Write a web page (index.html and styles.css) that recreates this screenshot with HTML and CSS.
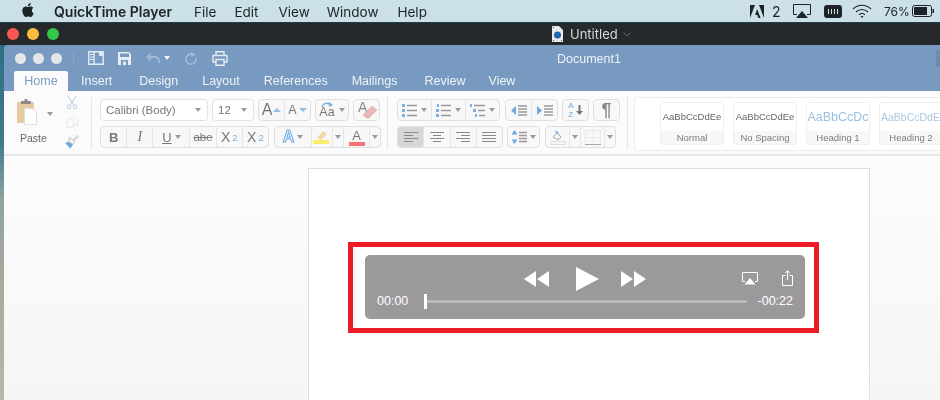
FILE: index.html
```html
<!DOCTYPE html>
<html lang="en">

<head>
  <meta charset="UTF-8">
  <title>QuickTime Player over Word</title>
  <link rel="stylesheet" href="styles.css">
</head>

<body>
  <!-- macOS menu bar -->
  <header class="menubar">
    <svg class="apple" viewBox="0 0 24 24" width="14" height="16"><path fill="#1d2327" d="M12.152 6.896c-.948 0-2.415-1.078-3.96-1.04-2.04.027-3.91 1.183-4.961 3.014-2.117 3.675-.546 9.103 1.519 12.09 1.013 1.454 2.208 3.09 3.792 3.039 1.52-.065 2.09-.987 3.935-.987 1.831 0 2.35.987 3.96.948 1.637-.026 2.676-1.48 3.676-2.948 1.156-1.688 1.636-3.325 1.662-3.415-.039-.013-3.182-1.221-3.22-4.857-.026-3.04 2.48-4.494 2.597-4.559-1.429-2.09-3.623-2.324-4.39-2.376-2-.156-3.675 1.09-4.61 1.09zM15.53 3.83c.843-1.012 1.4-2.427 1.245-3.83-1.207.052-2.662.805-3.532 1.818-.78.896-1.454 2.338-1.273 3.714 1.338.104 2.715-.688 3.559-1.701"/></svg>
    <b class="app-name">QuickTime Player</b>
    <span class="menu m-file">File</span>
    <span class="menu m-edit">Edit</span>
    <span class="menu m-view">View</span>
    <span class="menu m-window">Window</span>
    <span class="menu m-help">Help</span>
    <div class="status">
      <svg width="14" height="13" viewBox="0 0 14 13"><path fill="#1d2327" d="M0 13 5 0H0zM9 0l5 13V0zM7 4l3.600 9H8.400L7.300 10H5.200z"/></svg>
      <span class="status-num">2</span>
      <svg class="st-air" width="18" height="14" viewBox="0 0 18 14"><path fill="none" stroke="#1d2327" d="M4 10.500H.5v-10h17v10H14"/><path fill="#1d2327" d="M9 7l6 7H3z"/></svg>
      <svg class="st-mem" width="18" height="13" viewBox="0 0 18 13"><rect width="18" height="13" rx="3" fill="#1d2327"/><path stroke="#cbe0e7" d="M4.500 4v5M7.500 4v5M10.500 4v5M13.500 4v5"/></svg>
      <svg class="st-wifi" width="20" height="14" viewBox="0 0 20 14"><g fill="none" stroke="#1d2327" stroke-width="1.100"><path d="M1 5c5-5 13-5 18 0"/><path d="M4 8c3.500-3.300 8.500-3.300 12 0"/><path d="M7 10.800c1.800-1.500 4.200-1.500 6 0"/></g><path fill="#1d2327" d="M10 14l-1.500-2h3z"/></svg>
      <span class="status-pct">76%</span>
      <svg class="st-batt" width="22" height="12" viewBox="0 0 22 12"><rect x=".5" y=".5" width="19" height="11" rx="2" fill="none" stroke="#1d2327"/><rect x="2" y="2" width="13" height="8" fill="#1d2327"/><rect x="20.500" y="4" width="1.500" height="4" fill="#1d2327"/></svg>
    </div>
  </header>

  <!-- QuickTime window title -->
  <div class="qt-bar">
    <div class="lights">
      <i class="light red"></i><i class="light amber"></i><i class="light green"></i>
    </div>
    <div class="qt-title">
      <svg width="11" height="16" viewBox="0 0 11 16"><path fill="#e9e9e9" d="M0 0h7l4 4v12H0z"/><circle cx="5.500" cy="9" r="3.500" fill="#1f63b5"/><path fill="#555" d="M1 1h1v1H1zM1 14h1v1H1zM9 14h1v1H9z"/></svg>
      <span>Untitled</span>
      <svg width="8" height="5" viewBox="0 0 8 5"><path fill="none" stroke="#6a6e70" d="M.5.500 4 4 7.500.5"/></svg>
    </div>
  </div>

  <div class="desktop">
    <div class="word">
      <div class="word-title">
        <div class="word-tools">
          <div class="word-dots"><i></i><i></i><i></i></div>
          <svg class="t-side" width="16" height="14" viewBox="0 0 16 14"><path fill="none" stroke="#e6ecf3" stroke-width="1.400" d="M.8.800h14.400v12.400H.8zM6 .8v12.400"/><path fill="#e6ecf3" d="M2 3h3v1H2zM2 5.500h3v1H2zM2 8h3v1H2zM11 1h4v4h-4z"/></svg>
          <svg class="t-save" width="13" height="13" viewBox="0 0 13 13"><path fill="#e6ecf3" d="M0 0h11l2 2v11H0z"/><path fill="#7899c0" d="M2 1.500h9v3.500H2zM3 8h7v5H3z"/><path fill="#e6ecf3" d="M5 9.500h3V13H5z"/></svg>
          <svg class="t-undo" width="14" height="12" viewBox="0 0 14 12"><path fill="none" stroke="#a3b9d5" stroke-width="1.800" d="M5 1.500 1.500 5 5 8.500M1.500 5H9a4 4 0 0 1 4 4v2"/></svg>
          <i class="t-caret"></i>
          <svg class="t-redo" width="12" height="13" viewBox="0 0 12 13"><path fill="none" stroke="#a3b9d5" stroke-width="1.800" d="M7 2.200A5 5 0 1 0 10.800 6"/><path fill="#a3b9d5" d="M6 0l5 2.500L6 5z"/></svg>
          <svg class="t-print" width="16" height="15" viewBox="0 0 16 15"><g fill="none" stroke="#e6ecf3" stroke-width="1.400"><path d="M4 4V.8h8V4M4 11H1V4.500h14V11h-3"/><path d="M4 8.500h8v5.700H4z"/></g></svg>
        </div>
        <span class="doc-name">Document1</span>
        <div class="word-search"><i></i></div>
      </div>

      <nav class="tabs">
        <span class="tab active">Home</span>
        <span class="tab t-insert">Insert</span>
        <span class="tab t-design">Design</span>
        <span class="tab t-layout">Layout</span>
        <span class="tab t-refs">References</span>
        <span class="tab t-mail">Mailings</span>
        <span class="tab t-review">Review</span>
        <span class="tab t-view">View</span>
      </nav>

      <section class="ribbon">
        <div class="clip-section">
          <div class="paste">
            <svg width="21" height="26" viewBox="0 0 21 26"><path fill="#e9c9a2" d="M0 3h17v21H0z"/><path fill="#fff" stroke="#ddd" d="M7.500 9.500h8l4 4v12h-12z"/><path fill="#8d8d8d" d="M4 2h3l1-2h2l1 2h3v3H4z"/></svg>
            <i class="caret paste-caret"></i>
            <span class="paste-label">Paste</span>
          </div>
          <div class="clip-icons">
            <svg width="14" height="15" viewBox="0 0 14 15"><g fill="none" stroke="#c3d3e4" stroke-width="1.200"><path d="M2 0l7 10M12 0 5 10"/><circle cx="3.500" cy="12.500" r="2"/><circle cx="10.500" cy="12.500" r="2"/></g></svg>
            <svg width="13" height="14" viewBox="0 0 13 14"><path fill="#fbfbfb" stroke="#e6e6e6" d="M.5 3.500h7v10h-7zM4.500.5h5l3 3v7h-5"/></svg>
            <svg width="16" height="16" viewBox="0 0 16 16"><path fill="#f2f2f2" stroke="#bbb" d="M10 5l4-4.500 1.500 1.500-4.500 4z"/><path fill="#f2f2f2" stroke="#bbb" d="M5 3l6 4-2 4-5-3z"/><path fill="#74a6d9" d="M0 9l4-1 5 3-3 5z"/></svg>
          </div>
        </div>

        <div class="font-section">
          <div class="row">
            <div class="combo combo-font"><span>Calibri (Body)</span><i class="caret"></i></div>
            <div class="combo combo-size"><span>12</span><i class="caret"></i></div>
            <div class="grp w53">
              <span class="btn grow-a">A<i class="arrow up"></i></span>
              <span class="btn shrink-a">A<i class="arrow down"></i></span>
            </div>
            <div class="grp w34">
              <span class="btn case-a">
                <span class="case-wrap"><svg width="12" height="5" viewBox="0 0 12 5"><path fill="none" stroke="#7db1e3" stroke-width="1.300" d="M1 5c1-4 6-5 9-2"/><path fill="#7db1e3" d="M8 0l4 3-4 2z"/></svg><span>Aa</span></span><i class="caret"></i>
              </span>
            </div>
            <div class="grp w27">
              <span class="btn">
                <svg width="22" height="20" viewBox="0 0 22 20"><text x="2" y="12" font-size="14" fill="#8a8a8a" font-family="Liberation Sans">A</text><path fill="#ebb7ba" stroke="#d9a0a4" stroke-width=".5" d="M7 15 16 6l5 4-8 8H10z"/></svg>
              </span>
            </div>
          </div>
          <div class="row">
            <div class="grp w169 fmt">
              <span class="btn f-b"><b>B</b></span>
              <span class="btn f-i"><em>I</em></span>
              <span class="btn f-u"><u>U</u><i class="caret"></i></span>
              <span class="btn f-s"><s>abe</s></span>
              <span class="btn f-x">X<sub>2</sub></span>
              <span class="btn f-x">X<sup>2</sup></span>
            </div>
            <div class="grp w107">
              <span class="btn f-fx"><span class="fx-a">A</span><i class="caret"></i></span>
              <span class="btn f-hl">
                <svg width="18" height="16" viewBox="0 0 18 16"><path fill="#f3d9a3" d="M4 9l6-7 4 3-6 6z"/><path fill="#fbee6f" d="M0 11h16v4H0z"/></svg>
              </span>
              <span class="btn f-cl"><i class="caret"></i></span>
              <span class="btn f-color"><span class="color-a">A</span><i class="color-bar"></i></span>
              <span class="btn f-cl"><i class="caret"></i></span>
            </div>
          </div>
        </div>

        <div class="para-section">
          <div class="row">
            <div class="grp w103">
              <span class="btn l-list">
                <svg width="15" height="13" viewBox="0 0 15 13"><path fill="#7db1e3" d="M0 0h3v3H0zM0 5h3v3H0zM0 10h3v3H0z"/><path stroke="#999" stroke-width="1.300" d="M5 1.500h10M5 6.500h10M5 11.500h10"/></svg><i class="caret"></i>
              </span>
              <span class="btn l-list">
                <svg width="15" height="13" viewBox="0 0 15 13"><path fill="#7db1e3" d="M1 0h2v3H1zM0 5h3v3H0zM0 10h3v3H0z"/><path stroke="#999" stroke-width="1.300" d="M5 1.500h10M5 6.500h10M5 11.500h10"/></svg><i class="caret"></i>
              </span>
              <span class="btn l-list">
                <svg width="15" height="13" viewBox="0 0 15 13"><path fill="#7db1e3" d="M0 0h2v3H0zM3 5h3v3H3zM5 10h2v3H5z"/><path stroke="#999" stroke-width="1.300" d="M4 1.500h11M8 6.500h7M9 11.500h6"/></svg><i class="caret"></i>
              </span>
            </div>
            <div class="grp w53">
              <span class="btn">
                <svg width="16" height="11" viewBox="0 0 16 11"><path fill="#6fa9e0" d="M0 5.500 5 1v9z"/><path stroke="#999" stroke-width="1.300" d="M7 1h9M7 4h9M7 7h9M7 10h9"/></svg>
              </span>
              <span class="btn">
                <svg width="16" height="11" viewBox="0 0 16 11"><path fill="#6fa9e0" d="M5 5.500 0 1v9z"/><path stroke="#999" stroke-width="1.300" d="M7 1h9M7 4h9M7 7h9M7 10h9"/></svg>
              </span>
            </div>
            <div class="grp w27">
              <span class="btn sort"><span class="sort-az"><span>A</span><span>Z</span></span>
                <svg width="7" height="10" viewBox="0 0 7 10"><path fill="#777" d="M2.500 0h2v6H7l-3.500 4L0 6h2.500z"/></svg>
              </span>
            </div>
            <div class="grp w27"><span class="btn pilcrow">¶</span></div>
          </div>
          <div class="row">
            <div class="grp w106">
              <span class="btn pressed"><svg width="14" height="10" viewBox="0 0 14 10"><path stroke="#888" d="M0 .5h14M0 3.500h9M0 6.500h14M0 9.500h9"/></svg></span>
              <span class="btn"><svg width="14" height="10" viewBox="0 0 14 10"><path stroke="#888" d="M0 .5h14M3 3.500h8M0 6.500h14M3 9.500h8"/></svg></span>
              <span class="btn"><svg width="14" height="10" viewBox="0 0 14 10"><path stroke="#888" d="M0 .5h14M5 3.500h9M0 6.500h14M5 9.500h9"/></svg></span>
              <span class="btn"><svg width="14" height="10" viewBox="0 0 14 10"><path stroke="#888" d="M0 .5h14M0 3.500h14M0 6.500h14M0 9.500h14"/></svg></span>
            </div>
            <div class="grp w33">
              <span class="btn">
                <svg width="15" height="14" viewBox="0 0 15 14"><path fill="#6fa9e0" d="M2.500 0l3 4.500h-6zM2.500 14l-3-4.500h6z"/><path stroke="#999" stroke-width="1.300" d="M7 2.500h8M7 5.500h8M7 8.500h8M7 11.500h8"/></svg><i class="caret"></i>
              </span>
            </div>
            <div class="grp w71">
              <span class="btn shade">
                <svg width="16" height="15" viewBox="0 0 16 15"><path fill="#6fa9e0" d="M5 0l4 3-2 2z"/><path fill="#f4f4f4" stroke="#aaa" d="M3 7l4-4 4 4-3 3z"/><path fill="none" stroke="#ddd" d="M.5 11.500h15v3H.5z"/></svg>
              </span>
              <span class="btn f-cl"><i class="caret"></i></span>
              <span class="btn shade">
                <svg width="16" height="15" viewBox="0 0 16 15"><path fill="none" stroke="#ddd" stroke-dasharray="1 1" d="M.5.500h15v14H.5zM8 0v15M0 7.500h16"/><path stroke="#aaa" d="M0 14.500h16"/></svg>
              </span>
              <span class="btn f-cl"><i class="caret"></i></span>
            </div>
          </div>
        </div>

        <div class="styles">
          <div class="style-card"><span class="preview">AaBbCcDdEe</span><span class="style-name">Normal</span></div>
          <div class="style-card"><span class="preview">AaBbCcDdEe</span><span class="style-name">No Spacing</span></div>
          <div class="style-card"><span class="preview h1">AaBbCcDc</span><span class="style-name">Heading 1</span></div>
          <div class="style-card"><span class="preview h2">AaBbCcDdEe</span><span class="style-name">Heading 2</span></div>
        </div>
      </section>

      <main class="doc-area">
        <div class="page">
          <div class="callout">
            <div class="player">
              <div class="transport">
                <div class="transport-main">
                  <svg class="tr-back" width="25" height="16" viewBox="0 0 25 16"><path fill="#fff" d="M0 8 12 0v16zM13 8 25 0v16z"/></svg>
                  <svg class="tr-play" width="23" height="24" viewBox="0 0 23 24"><path fill="#fff" d="M0 0l23 12L0 24z"/></svg>
                  <svg width="25" height="16" viewBox="0 0 25 16"><path fill="#fff" d="M0 0l12 8-12 8zM13 0l12 8-12 8z"/></svg>
                </div>
                <div class="transport-side">
                  <svg width="16" height="13" viewBox="0 0 16 13"><path fill="none" stroke="#fff" d="M3 9.500H.5v-9h15v9H13"/><path fill="#fff" d="M8 6l5.500 6.500h-11z"/></svg>
                  <svg width="11" height="16" viewBox="0 0 11 16"><path fill="none" stroke="#fff" d="M3.500 5.500H.5v10h10v-10h-3M5.500 1v9M3 3.200 5.500.8 8 3.200"/></svg>
                </div>
              </div>
              <div class="timeline">
                <span class="time">00:00</span>
                <div class="scrub"><i class="handle"></i></div>
                <span class="time remain">-00:22</span>
              </div>
            </div>
          </div>
        </div>
      </main>
    </div>
  </div>
</body>

</html>
```

FILE: styles.css
```css
/* Page frame */
html, body {
  margin: 0;
  height: 400px;
  overflow: hidden;
}

body {
  width: 940px;
  display: flex;
  flex-direction: column;
  font-family: "Liberation Sans", Arial, sans-serif;
  background: #fff;
}

i {
  display: block;
}

/* the reference is a slightly soft screenshot everywhere but the player */
.menubar > *,
.qt-title,
.word-tools,
.doc-name,
.tabs > *,
.clip-section > *,
.row > *,
.styles > * {
  filter: blur(0.35px);
}

/* macOS menu bar */
.menubar {
  height: 22px;
  display: flex;
  align-items: center;
  flex-shrink: 0;
  padding-left: 21px;
  background: #cbe0e7;
  color: #1d2327;
  font-family: Inter, sans-serif;
  font-size: 13.500px;
}

.apple {
  margin-top: -3px;
}

.app-name {
  margin-left: 19px;
  padding-top: 1px;
  font-weight: 600;
  font-size: 14px;
  width: 120px;
  white-space: nowrap;
}

.menu {
  padding-top: 1px;
}

.m-file { margin-left: 20px; }
.m-edit { margin-left: 18px; }
.m-view { margin-left: 20px; }
.m-window { margin-left: 17px; }
.m-help { margin-left: 19px; }

.status {
  margin-left: auto;
  padding-right: 6px;
  display: flex;
  align-items: center;
  font-size: 12px;
}

.status-num {
  width: 8px;
  margin-left: 8px;
  font-size: 14px;
}

.st-air { margin-left: 13px; }
.st-mem { margin-left: 13px; }
.st-wifi { margin-left: 10px; }

.status-pct {
  width: 23px;
  margin-left: 12px;
  white-space: nowrap;
}

.st-batt { margin-left: 5px; }

/* QuickTime title bar */
.qt-bar {
  height: 23px;
  flex-shrink: 0;
  display: flex;
  align-items: center;
  padding-left: 7px;
  box-sizing: border-box;
  background: #25292c;
  border-top: 1px solid #1c3e49;
}

.lights {
  display: flex;
  gap: 8px;
}

.light {
  width: 12px;
  height: 12px;
  border-radius: 50%;
}

.red { background: #fc5753; }
.amber { background: #fdbc40; }
.green { background: #33c748; }

.qt-title {
  margin-left: 493px;
  display: flex;
  align-items: center;
  color: #d5d7d8;
  font-family: Inter, sans-serif;
  font-size: 13px;
}

.qt-title span {
  margin-left: 7px;
  margin-right: 5px;
}

/* Word window */
.desktop {
  flex: 1;
  min-height: 0;
  padding-left: 4px;
  background: linear-gradient(#2f6f84 0, #3e7a8c 95px, #8fa3a0 155px, #aaa99c 240px, #b9b7ab 100%);
}

.word {
  width: 1170px;
  height: 100%;
  display: flex;
  flex-direction: column;
  border-radius: 4px 0 0 0;
  overflow: hidden;
}

.word-title {
  height: 26px;
  flex-shrink: 0;
  display: grid;
  grid-template-columns: 1fr auto 1fr;
  align-items: center;
  background: #7899c0;
}

.word-tools {
  display: flex;
  align-items: center;
  padding-left: 11px;
}

.word-dots {
  display: flex;
  gap: 7px;
  padding-right: 11px;
  border-right: 1px solid #8aa6c9;
}

.word-dots i {
  width: 11px;
  height: 11px;
  border-radius: 50%;
  background: #e4e6e9;
}

.t-side { margin-left: 14px; }
.t-save { margin-left: 14px; }
.t-undo { margin-left: 15px; }

.t-caret {
  margin-left: 4px;
  border: 3px solid transparent;
  border-top: 4px solid #f1f4f8;
  border-bottom: 0;
}

.t-redo { margin-left: 15px; }
.t-print { margin-left: 15px; }

.doc-name {
  padding-top: 2px;
  color: #eef2f7;
  font-size: 12.500px;
}

.word-search i {
  margin-left: 315px;
  width: 10px;
  height: 17px;
  background: #6d8ab0;
}

.tabs {
  height: 20px;
  flex-shrink: 0;
  display: flex;
  align-items: flex-end;
  padding-left: 10px;
  background: #7899c0;
  color: #eef2f7;
  font-size: 12.500px;
}

.tab {
  height: 20px;
  line-height: 20px;
  white-space: nowrap;
}

.tab.active {
  width: 54px;
  margin-right: 13px;
  box-sizing: border-box;
  text-align: center;
  background: #fbfbfb;
  color: #7a9ac2;
  border-radius: 2px 2px 0 0;
}

.t-design { margin-left: 27px; }
.t-layout { margin-left: 24px; }
.t-refs { margin-left: 24px; }
.t-mail { margin-left: 24px; }
.t-review { margin-left: 27px; }
.t-view { margin-left: 23px; }

/* Ribbon */
.ribbon {
  height: 65px;
  flex-shrink: 0;
  display: flex;
  box-sizing: border-box;
  background: #fbfbfb;
  border-bottom: 2px solid #e6e6e6;
  color: #777;
}

.clip-section {
  width: 88px;
  height: 52px;
  margin-top: 6px;
  flex-shrink: 0;
  box-sizing: border-box;
  border-right: 1px solid #e6e6e6;
  display: flex;
}

.paste {
  width: 60px;
  position: relative;
  padding: 2px 0 0 13px;
  box-sizing: border-box;
}

.paste-caret {
  position: absolute;
  left: 43px;
  top: 15px;
}

.paste-label {
  display: block;
  margin: 3px 0 0 3px;
  font-size: 10.500px;
  color: #666;
}

.clip-icons {
  display: flex;
  flex-direction: column;
  align-items: center;
  gap: 7px;
  width: 16px;
  margin-top: -1px;
}

.font-section {
  width: 296px;
  padding: 3px 0 0 8px;
  margin-top: 5px;
  height: 53px;
  box-sizing: border-box;
  flex-shrink: 0;
  border-right: 1px solid #e6e6e6;
}

.para-section {
  width: 240px;
  padding: 3px 0 0 9px;
  margin-top: 5px;
  height: 53px;
  box-sizing: border-box;
  flex-shrink: 0;
  border-right: 1px solid #e6e6e6;
}

.row {
  display: flex;
  gap: 4px;
  height: 22px;
  margin-bottom: 5px;
}

.caret {
  flex-shrink: 0;
  border: 3px solid transparent;
  border-top: 4px solid #9a9a9a;
  border-bottom: 0;
}

.combo {
  display: flex;
  align-items: center;
  justify-content: space-between;
  box-sizing: border-box;
  padding: 0 6px 0 5px;
  background: #fff;
  border: 1px solid #e2e2e2;
  border-radius: 4px;
  font-size: 11.500px;
}

.combo-font { width: 108px; }
.combo-size { width: 42px; }

.grp {
  display: flex;
  box-sizing: border-box;
  background: #f8f8f8;
  border: 1px solid #dfdfdf;
  border-radius: 4px;
  overflow: hidden;
}

.w27 { width: 27px; }
.w33 { width: 33px; }
.w34 { width: 34px; }
.w53 { width: 53px; }
.w71 { width: 71px; margin-left: 1px; }
.w103 { width: 103px; margin-right: 1px; }
.w106 { width: 106px; }
.w107 { width: 107px; margin-left: 1px; }
.w169 { width: 169px; }

.btn {
  flex: 1 1 0;
  min-width: 0;
  box-sizing: border-box;
  display: flex;
  align-items: center;
  justify-content: center;
  gap: 3px;
  border-left: 1px solid #e6e6e6;
  font-size: 13px;
}

.btn:first-child {
  border-left: 0;
}

.pressed {
  background: #d7d7d7;
}

.grow-a { font-size: 16px; gap: 1px; }
.shrink-a { font-size: 12.500px; gap: 2px; }

.arrow {
  border: 4px solid transparent;
}

.arrow.up {
  border-top: 0;
  border-bottom: 4px solid #8fc0ec;
}

.arrow.down {
  border-bottom: 0;
  border-top: 4px solid #8fc0ec;
}

.case-a {
  font-size: 12.500px;
  gap: 4px;
}

.case-wrap {
  display: flex;
  flex-direction: column;
  align-items: center;
  line-height: 11px;
}

.fmt .btn b { font-size: 13px; }
.f-i em { font-family: "Liberation Serif", serif; font-size: 14px; }
.f-u { flex: 0 0 37px; }
.f-s { font-size: 11.500px; }
.f-x { font-size: 14px; gap: 0; }
.f-x sub, .f-x sup { font-size: 9.500px; color: #7db1e3; margin-left: 2px; }

.f-fx { flex: 0 0 36px; }

.fx-a {
  color: #eef6fd;
  font-weight: bold;
  font-size: 16px;
  -webkit-text-stroke: 1px #72aee6;
}

.f-hl { flex: 0 0 21px; }
.f-cl { flex: 0 0 11px; }
.f-color { flex: 0 0 26px; flex-direction: column; gap: 0; }

.color-a {
  font-size: 13px;
  line-height: 13px;
}

.color-bar {
  width: 16px;
  height: 4px;
  background: #fb7474;
}

.l-list {
  gap: 4px;
}

.sort {
  gap: 2px;
}

.sort-az {
  display: flex;
  flex-direction: column;
  font-size: 8px;
  line-height: 9px;
  color: #6fa9e0;
}

.pilcrow {
  font-size: 18px;
  font-weight: bold;
  color: #888;
}

/* Style gallery */
.styles {
  flex: 1;
  height: 54px;
  margin: 6px 0 0 6px;
  box-sizing: border-box;
  padding: 4px 0 0 25px;
  display: flex;
  gap: 9px;
  background: #fff;
  border: 1px solid #ececec;
  border-radius: 4px 0 0 4px;
}

.style-card {
  width: 64px;
  height: 43px;
  flex-shrink: 0;
  display: flex;
  flex-direction: column;
  box-sizing: border-box;
  border: 1px solid #f0f0f0;
  border-radius: 3px;
  overflow: hidden;
}

.preview {
  height: 28px;
  line-height: 28px;
  text-align: center;
  white-space: nowrap;
  font-size: 9.500px;
  color: #666;
}

.preview.h1 {
  font-size: 12.500px;
  color: #9cbfde;
}

.preview.h2 {
  font-size: 10.500px;
  color: #aac8e2;
  text-align: left;
  padding-left: 1px;
}

.style-name {
  flex: 1;
  background: #f7f7f7;
  line-height: 14px;
  text-align: center;
  font-size: 9.500px;
  color: #7b7b7b;
}

/* Document */
.doc-area {
  flex: 1;
  padding-top: 12px;
  background: linear-gradient(#fcfcfc, #f1f1f1);
}

.page {
  width: 562px;
  height: 400px;
  margin: 0 auto;
  box-sizing: border-box;
  padding: 73px 0 0 39px;
  background: #fff;
  border: 1px solid #dedede;
}

.callout {
  width: 471px;
  height: 91px;
  box-sizing: border-box;
  padding: 8px 9px 0 12px;
  border: 5px solid #ed1c24;
}

.player {
  height: 64px;
  box-sizing: border-box;
  padding: 12px 12px 0;
  background: #9b999b;
  border-radius: 5px;
}

.transport {
  height: 26px;
  display: grid;
  grid-template-columns: 1fr auto 1fr;
  align-items: center;
}

.transport-main {
  grid-column: 2;
  display: flex;
  align-items: center;
  margin-top: -3px;
}

.tr-back { margin-right: 27px; }
.tr-play { margin-right: 22px; }

.transport-side {
  display: flex;
  align-items: center;
  justify-content: flex-end;
  gap: 24px;
  margin-top: -4px;
}

.timeline {
  display: flex;
  align-items: center;
  margin-top: -1px;
  height: 18px;
}

.time {
  color: #fff;
  font-size: 12.500px;
  width: 47px;
  flex-shrink: 0;
}

.remain {
  width: 46px;
  text-align: right;
}

.scrub {
  flex: 1;
  height: 3px;
  position: relative;
  background: #b9b7b9;
}

.handle {
  position: absolute;
  left: 0;
  top: -6px;
  width: 3px;
  height: 15px;
  background: #fff;
}
```
